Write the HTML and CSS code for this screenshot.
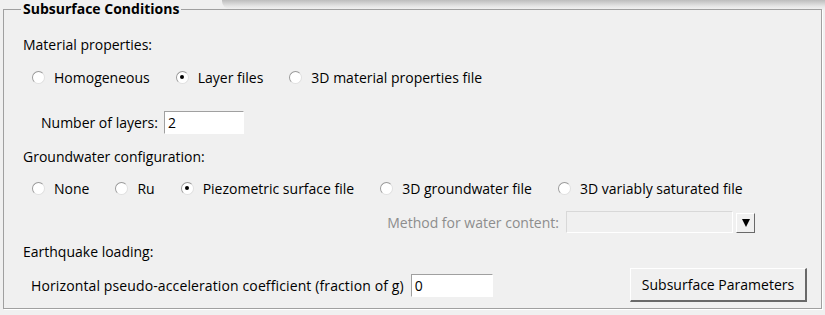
FILE: index.html
```html
<!DOCTYPE html>
<html lang="en">
<head>
    <meta charset="UTF-8">
    <title>Subsurface Conditions</title>
    <link rel="stylesheet" href="styles.css">
</head>
<body>
    <div class="top-shadow"></div>
    <fieldset class="panel">
        <legend>Subsurface Conditions</legend>

        <div class="row label-row first">Material properties:</div>

        <div class="row radio-row r2">
            <label class="radio"><span class="dot"></span>Homogeneous</label>
            <label class="radio"><span class="dot checked"></span>Layer files</label>
            <label class="radio"><span class="dot"></span>3D material properties file</label>
        </div>

        <div class="row layers-row">
            <span>Number of layers:</span>
            <span class="field layers">2</span>
        </div>

        <div class="row label-row r4">Groundwater configuration:</div>

        <div class="row radio-row r5">
            <label class="radio"><span class="dot"></span>None</label>
            <label class="radio"><span class="dot"></span>Ru</label>
            <label class="radio"><span class="dot checked"></span>Piezometric surface file</label>
            <label class="radio"><span class="dot"></span>3D groundwater file</label>
            <label class="radio"><span class="dot"></span>3D variably saturated file</label>
        </div>

        <div class="row method-row">
            <span class="disabled">Method for water content:</span>
            <span class="combo"></span>
            <span class="arrow-btn"><span class="tri"></span></span>
        </div>

        <div class="row label-row r7">Earthquake loading:</div>

        <div class="row quake-row">
            <div class="quake-left">
                <span class="coef-label">Horizontal pseudo-acceleration coefficient (fraction of g)</span>
                <span class="field coef">0</span>
            </div>
            <button class="btn">Subsurface Parameters</button>
        </div>
    </fieldset>
</body>
</html>
```

FILE: styles.css
```css
body {
    margin: 0;
    background-color: #f0f0f0;
    font-family: "Open Sans", "Liberation Sans", sans-serif;
    font-size: 14px;
    color: #000;
    height: 315px;
    overflow: hidden;
    position: relative;
}
.top-shadow {
    position: absolute;
    top: 0;
    left: 222px;
    right: 0;
    height: 9px;
    background: linear-gradient(#bdbdbd, #e6e6e6 70%, #f0f0f0);
    border-radius: 0 0 0 8px;
}
.panel {
    margin: 0 3px 0 3px;
    padding: 0 0 6px 19px;
    border: 1px solid #a0a0a0;
    box-shadow: 1px 1px 0 #fff;
    min-width: 0;
    position: relative;
}
.panel legend {
    font-weight: bold;
    margin-left: -2px;
    padding: 0 2px;
    line-height: 18px;
}
.row {
    display: flex;
    align-items: center;
}
.label-row { height: 20px; }
.first { margin-top: 16px; }
.r4 { margin-top: 12px; }
.r7 { margin-top: 8px; }

.radio-row {
    height: 20px;
    padding-left: 9px;
    gap: 26px;
}
.r2 { margin-top: 13px; }
.r5 { margin-top: 12px; }
.radio {
    display: flex;
    align-items: center;
}
.dot {
    width: 11px;
    height: 11px;
    border-radius: 50%;
    background: #fff;
    border: 1px solid #9a9a9a;
    border-right-color: #e0e0e0;
    border-bottom-color: #e0e0e0;
    margin-right: 9px;
    display: flex;
    align-items: center;
    justify-content: center;
}
.dot.checked::after {
    content: "";
    width: 4px;
    height: 4px;
    border-radius: 50%;
    background: #000;
}

.field {
    background: #fff;
    border: 1px solid #fff;
    border-top-color: #a0a0a0;
    border-left-color: #a0a0a0;
    height: 21px;
    line-height: 21px;
    padding-left: 3px;
    box-sizing: border-box;
}
.layers-row {
    margin-top: 23px;
    height: 24px;
    padding-left: 18px;
    gap: 6px;
}
.layers { width: 80px; height: 23px; }

.method-row {
    margin-top: 13px;
    height: 22px;
    justify-content: flex-end;
    padding-right: 66px;
}
.disabled { color: #8d8d8d; }
.combo {
    width: 167px;
    height: 22px;
    margin-left: 7px;
    box-sizing: border-box;
    border: 1px solid #d8d8d8;
    border-bottom-color: #fff;
    border-right-color: #fff;
    background: #f0f0f0;
}
.arrow-btn {
    width: 19px;
    height: 20px;
    margin-left: 3px;
    margin-top: 2px;
    box-sizing: border-box;
    border: 1px solid #fff;
    border-right-color: #696969;
    border-bottom-color: #696969;
    background: #f0f0f0;
    display: flex;
    align-items: center;
    justify-content: center;
}
.tri {
    width: 0;
    height: 0;
    border-left: 4px solid transparent;
    border-right: 4px solid transparent;
    border-top: 8px solid #000;
}

.quake-row {
    margin-top: 7px;
    height: 34px;
    justify-content: space-between;
    padding-left: 8px;
    padding-right: 14px;
}
.quake-left {
    display: flex;
    align-items: center;
    gap: 7px;
}
.coef-label { letter-spacing: 0.12px; }
.coef { width: 82px; height: 23px; }
.btn {
    font-family: inherit;
    font-size: 14px;
    width: 177px;
    height: 34px;
    background: #f0f0f0;
    border: 1px solid #fff;
    border-right: 2px solid #696969;
    border-bottom: 2px solid #696969;
    padding: 0;
    color: #000;
}
```
